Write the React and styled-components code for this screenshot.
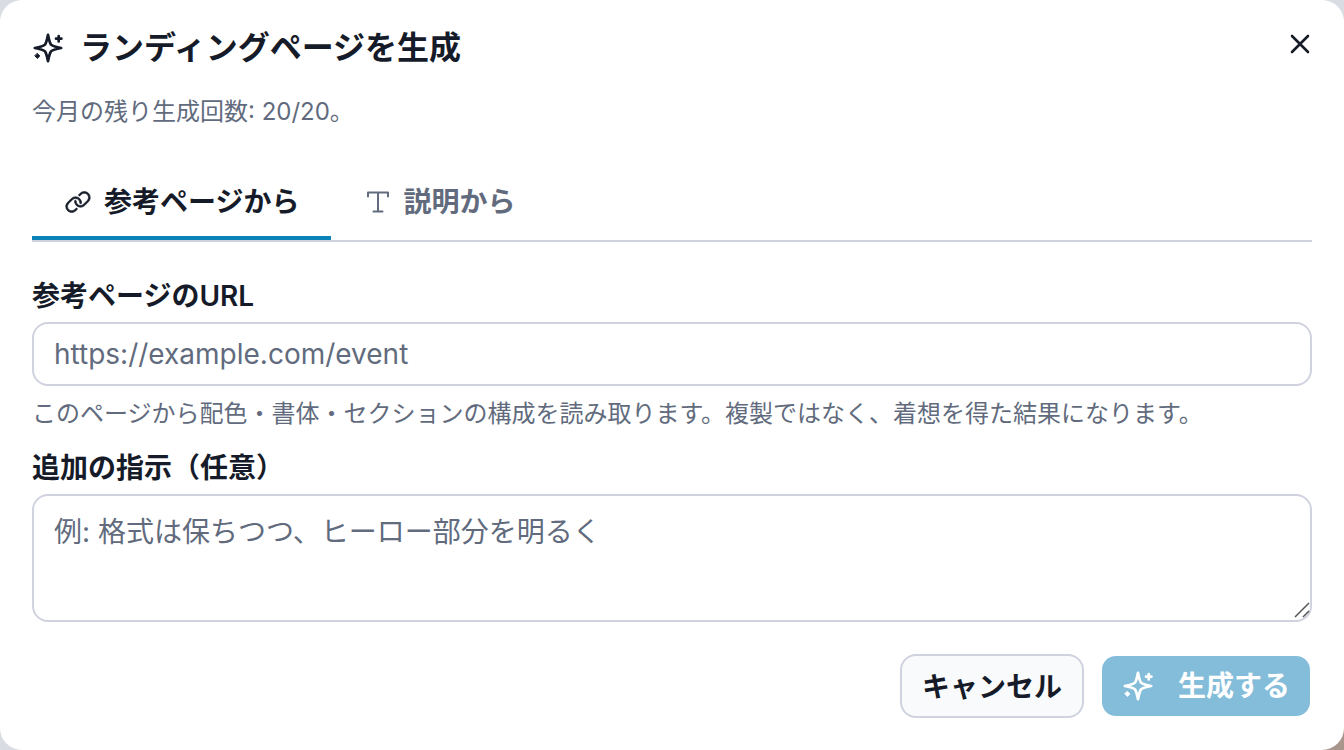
import React, { useState } from "react";
import styled, { createGlobalStyle } from "styled-components";
import { PiLink } from "react-icons/pi";

const SparkleIcon = () => (
  <Sparkle viewBox="0 0 32 32" aria-hidden="true">
    <path d="M16 2.8 C17 8 17.6 10.8 19 12.6 C20.8 14.4 23.8 15 29.2 16 C23.8 17 20.8 17.6 19 19.4 C17.6 21.2 17 24 16 29.2 C15 24 14.4 21.2 13 19.4 C11.2 17.6 8.2 17 2.8 16 C8.2 15 11.2 14.4 13 12.6 C14.4 10.8 15 8 16 2.8 Z" />
    <path d="M26.7 4 V9.4 M24 6.7 H29.4" />
    <path className="dot" d="M5.4 21.6 L7.8 24 L5.4 26.4 L3 24 Z" />
  </Sparkle>
);

const TextIcon = () => (
  <svg viewBox="0 0 28 28" fill="none" strokeWidth="2" strokeLinecap="round" strokeLinejoin="round" aria-hidden="true">
    <path d="M5 8.5 V4.5 H25 V8.5 M15 4.5 V23.5 M10.5 23.5 H19.5" />
  </svg>
);

const CloseIcon = () => (
  <CloseSvg viewBox="0 0 20 20" aria-hidden="true">
    <path d="M2 2 L18 18 M18 2 L2 18" />
  </CloseSvg>
);

const App = () => {
  const [tab, setTab] = useState("reference");
  const [url, setUrl] = useState("");
  const [notes, setNotes] = useState("");

  return (
    <>
      <GlobalStyle />
      <Dialog role="dialog" aria-labelledby="title">
        <Header>
          <Title id="title">
            <SparkleIcon />
            ランディングページを生成
          </Title>
          <CloseButton type="button" aria-label="閉じる">
            <CloseIcon />
          </CloseButton>
        </Header>
        <Remaining>今月の残り生成回数: 20/20。</Remaining>

        <Tabs role="tablist">
          <Tab
            type="button"
            role="tab"
            aria-selected={tab === "reference"}
            $active={tab === "reference"}
            onClick={() => setTab("reference")}
          >
            <PiLink className="link" />
            参考ページから
          </Tab>
          <Tab
            type="button"
            role="tab"
            aria-selected={tab === "text"}
            $active={tab === "text"}
            onClick={() => setTab("text")}
          >
            <TextIcon />
            説明から
          </Tab>
        </Tabs>

        <Form onSubmit={(ev) => ev.preventDefault()}>
          <Label htmlFor="url">参考ページのURL</Label>
          <Input
            id="url"
            type="url"
            placeholder="https://example.com/event"
            value={url}
            onChange={(ev) => setUrl(ev.target.value)}
          />
          <Hint>
            このページから配色・書体・セクションの構成を読み取ります。複製ではなく、着想を得た結果になります。
          </Hint>
          <Label htmlFor="notes">追加の指示（任意）</Label>
          <TextAreaWrapper>
            <TextArea
              id="notes"
              placeholder="例: 格式は保ちつつ、ヒーロー部分を明るく"
              value={notes}
              onChange={(ev) => setNotes(ev.target.value)}
            />
            <Grip viewBox="0 0 16 16" aria-hidden="true">
              <path d="M1 15 L15 1 M9 15 L15 9" />
            </Grip>
          </TextAreaWrapper>
          <Actions>
            <CancelButton type="button">キャンセル</CancelButton>
            <SubmitButton type="submit" disabled={!url}>
              <SparkleIcon />
              生成する
            </SubmitButton>
          </Actions>
        </Form>
      </Dialog>
    </>
  );
};

const GlobalStyle = createGlobalStyle`
  * {
    box-sizing: border-box;
  }

  body {
    margin: 0;
    background: linear-gradient(135deg, #d9dce2 0%, #d9dce2 90%, #a8968c 98%);
    color: #161b29;
    font-family: Inter, "Noto Sans CJK JP", sans-serif;
  }

  button, input, textarea {
    font-family: inherit;
  }
`;

const Dialog = styled.main`
  min-height: 100vh;
  padding: 26px 32px 32px;
  border-radius: 22px;
  background: #fff;
`;

const Header = styled.header`
  display: flex;
  justify-content: space-between;
  align-items: flex-start;
`;

const Title = styled.h1`
  display: flex;
  align-items: center;
  gap: 16px;
  margin: 0;
  font-size: 32px;
  font-weight: 600;
  line-height: 44px;
`;

const Sparkle = styled.svg`
  width: 32px;
  height: 32px;
  flex-shrink: 0;
  fill: none;
  stroke: currentColor;
  stroke-width: 2.7;
  stroke-linecap: round;
  stroke-linejoin: round;

  .dot {
    fill: currentColor;
    stroke-width: 1;
  }
`;

const CloseButton = styled.button`
  display: flex;
  margin-top: 6px;
  padding: 2px;
  border: none;
  background: none;
  color: inherit;
  cursor: pointer;
`;

const CloseSvg = styled.svg`
  width: 20px;
  height: 20px;
  stroke: currentColor;
  stroke-width: 2.6;
  stroke-linecap: round;
`;

const Remaining = styled.p`
  margin: 24px 0 0;
  color: #616b7d;
  font-size: 24px;
  line-height: 36px;
`;

const Tabs = styled.div`
  display: flex;
  margin-top: 30px;
  border-bottom: 2px solid #d0d3df;
`;

const Tab = styled.button`
  display: flex;
  align-items: center;
  gap: 12px;
  height: 80px;
  padding: 8px 32px 0;
  border: none;
  border-bottom: 4px solid ${(props) => (props.$active ? "#0a84b8" : "transparent")};
  background: none;
  color: ${(props) => (props.$active ? "#161b29" : "#616b7d")};
  font-size: 28px;
  font-weight: 600;
  line-height: 40px;
  cursor: pointer;

  svg {
    width: 28px;
    height: 28px;
    flex-shrink: 0;
    stroke: currentColor;
  }

  .link {
    stroke-width: 6;
  }
`;

const Form = styled.form`
  display: flex;
  flex-direction: column;
  margin-top: 34px;
`;

const Label = styled.label`
  margin-bottom: 6px;
  font-size: 28px;
  font-weight: 600;
  line-height: 40px;
`;

const Input = styled.input`
  height: 64px;
  padding: 0 20px;
  border: 2px solid #d0d3df;
  border-radius: 16px;
  background: #fff;
  color: inherit;
  font-size: 28px;

  &::placeholder {
    color: #616b7d;
    opacity: 1;
  }
`;

const TextAreaWrapper = styled.div`
  display: flex;
  position: relative;
`;

const TextArea = styled.textarea`
  width: 100%;
  height: 128px;
  padding: 16px 20px;
  border: 2px solid #d0d3df;
  border-radius: 16px;
  background: #fff;
  color: inherit;
  font-size: 28px;
  line-height: 40px;
  resize: vertical;

  &::placeholder {
    color: #616b7d;
    opacity: 1;
  }

  &::-webkit-resizer {
    background: transparent;
  }
`;

const Grip = styled.svg`
  position: absolute;
  right: 2px;
  bottom: 4px;
  width: 16px;
  height: 16px;
  stroke: #555;
  stroke-width: 1.5;
  pointer-events: none;
`;

const Hint = styled.p`
  margin: 10px 0 16px;
  color: #616b7d;
  font-size: 24px;
  line-height: 36px;
`;

const Actions = styled.div`
  display: flex;
  justify-content: flex-end;
  align-items: center;
  gap: 18px;
  margin-top: 32px;
  padding-right: 2px;
`;

const CancelButton = styled.button`
  height: 64px;
  padding: 0 20px 2px;
  border: 2px solid #d0d3df;
  border-radius: 16px;
  background: #f9fafc;
  color: inherit;
  font-size: 28px;
  font-weight: 600;
  cursor: pointer;
`;

const SubmitButton = styled.button`
  display: flex;
  align-items: center;
  gap: 24px;
  height: 60px;
  padding: 0 20px;
  border: none;
  border-radius: 14px;
  background: #84bdd9;
  color: #fff;
  font-size: 28px;
  font-weight: 600;
  line-height: 40px;
`;

export default App;
